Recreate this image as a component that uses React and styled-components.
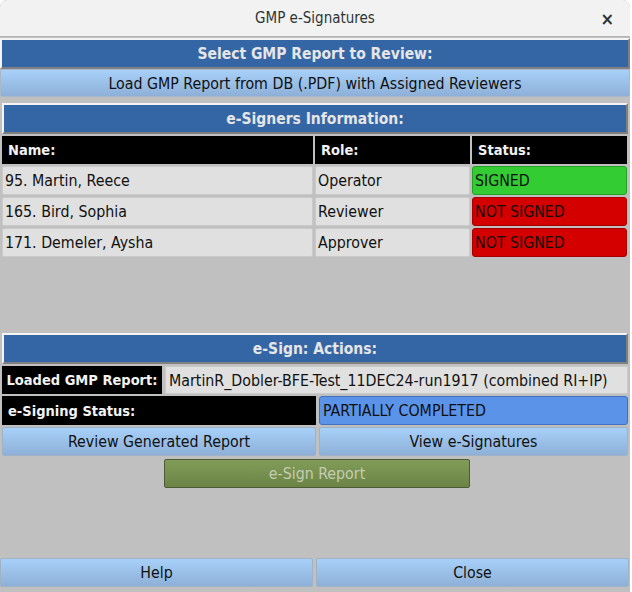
import styled, { createGlobalStyle } from 'styled-components';

const GlobalStyle = createGlobalStyle`
  html, body {
    margin: 0;
    padding: 0;
    background: #ffffff;
  }
  body {
    font-family: "DejaVu Sans Condensed", "DejaVu Sans", sans-serif;
    font-stretch: condensed;
  }
`;

const signers = [
  { name: '95. Martin, Reece', role: 'Operator', signed: true },
  { name: '165. Bird, Sophia', role: 'Reviewer', signed: false },
  { name: '171. Demeler, Aysha', role: 'Approver', signed: false },
];

export default function App() {
  return (
    <>
      <GlobalStyle />
      <Window>
        <TitleBar>
          <Title>GMP e-Signatures</Title>
          <CloseX>×</CloseX>
        </TitleBar>
        <Body>
          <SectionHeader>Select GMP Report to Review:</SectionHeader>
          <WideButton>Load GMP Report from DB (.PDF) with Assigned Reviewers</WideButton>

          <Inner>
            <SectionHeader>e-Signers Information:</SectionHeader>
            <Table>
              <HeadCell>Name:</HeadCell>
              <HeadCell>Role:</HeadCell>
              <HeadCell>Status:</HeadCell>
              {signers.map(s => (
                <Row key={s.name}>
                  <Cell>{s.name}</Cell>
                  <Cell>{s.role}</Cell>
                  <StatusCell signed={s.signed}>{s.signed ? 'SIGNED' : 'NOT SIGNED'}</StatusCell>
                </Row>
              ))}
            </Table>
          </Inner>

          <Spacer />

          <Inner>
            <SectionHeader>e-Sign: Actions:</SectionHeader>
            <LoadedRow>
              <Label center>Loaded GMP Report:</Label>
              <Value>MartinR_Dobler-BFE-Test_11DEC24-run1917 (combined RI+IP)</Value>
            </LoadedRow>
            <HalfRow>
              <Label>e-Signing Status:</Label>
              <StatusValue>PARTIALLY COMPLETED</StatusValue>
            </HalfRow>
            <HalfRow>
              <BlueButton>Review Generated Report</BlueButton>
              <BlueButton>View e-Signatures</BlueButton>
            </HalfRow>
            <SignRow>
              <SignButton>e-Sign Report</SignButton>
            </SignRow>
          </Inner>

          <Spacer />

          <Footer>
            <BlueButton>Help</BlueButton>
            <BlueButton>Close</BlueButton>
          </Footer>
        </Body>
      </Window>
    </>
  );
}

const Window = styled.div`
  width: 630px;
  height: 592px;
  display: flex;
  flex-direction: column;
  background: #c0c0c0;
  border-top-left-radius: 7px;
  border-top-right-radius: 7px;
  overflow: hidden;
`;

const TitleBar = styled.div`
  height: 37px;
  flex-shrink: 0;
  position: relative;
  display: flex;
  align-items: center;
  justify-content: center;
  background: #f2f2f2;
  border-bottom: 1px solid #b4b4b4;
  border-top-left-radius: 7px;
  border-top-right-radius: 7px;
  box-sizing: border-box;
`;

const Title = styled.span`
  font-size: 15px;
  color: #2e3436;
`;

const CloseX = styled.span`
  position: absolute;
  right: 16px;
  top: 8px;
  font-size: 18px;
  font-weight: bold;
  color: #2e3436;
`;

const Body = styled.div`
  flex: 1;
  display: flex;
  flex-direction: column;
  padding-top: 1px;
`;

const SectionHeader = styled.div`
  height: 31px;
  box-sizing: border-box;
  display: flex;
  align-items: center;
  justify-content: center;
  background: #3465a4;
  border-top: 2px solid #f4f4f4;
  border-left: 2px solid #f4f4f4;
  border-bottom: 2px solid #808080;
  border-right: 2px solid #808080;
  color: #e6e6e6;
  font-weight: bold;
  font-size: 15.5px;
`;

const buttonBase = `
  box-sizing: border-box;
  display: flex;
  align-items: center;
  justify-content: center;
  font-family: inherit;
  font-stretch: condensed;
  font-size: 15.8px;
  color: #101010;
  padding: 0;
  cursor: pointer;
`;

const WideButton = styled.button`
  ${buttonBase}
  height: 28px;
  width: 100%;
  border: 1px solid #a8b8c8;
  border-radius: 2px;
  background: linear-gradient(#a7d0f8, #8eb0d8);
`;

const BlueButton = styled.button`
  ${buttonBase}
  height: 29px;
  border: 1px solid #9fb2c6;
  border-radius: 2px;
  background: linear-gradient(#a7d0f8, #8eb0d8);
`;

const Inner = styled.div`
  display: flex;
  flex-direction: column;
  padding: 0 2px;
  margin-top: 6px;
`;

const Table = styled.div`
  display: grid;
  grid-template-columns: 311px 155px 155px;
  column-gap: 2px;
  row-gap: 2px;
  margin-top: 2px;
`;

const Row = styled.div`
  display: contents;
`;

const HeadCell = styled.div`
  height: 28px;
  display: flex;
  align-items: center;
  padding-left: 6px;
  background: #000;
  color: #f2f2f2;
  font-weight: bold;
  font-size: 14.5px;
`;

const Cell = styled.div`
  height: 29px;
  box-sizing: border-box;
  display: flex;
  align-items: center;
  padding-left: 2px;
  background: #e0e0e0;
  border: 1px solid #cacaca;
  border-radius: 2px;
  font-size: 15.8px;
  color: #101010;
`;

const StatusCell = styled(Cell)`
  background: ${props => (props.signed ? '#33cc33' : '#d40000')};
  border-color: ${props => (props.signed ? '#28a028' : '#a80000')};
  border-radius: 3px;
`;

const Spacer = styled.div`
  flex: 1;
`;

const LoadedRow = styled.div`
  display: grid;
  grid-template-columns: 160px 1fr;
  gap: 3px;
  margin-top: 2px;
  height: 28px;
`;

const Label = styled.div`
  display: flex;
  align-items: center;
  justify-content: ${props => (props.center ? 'center' : 'flex-start')};
  padding-left: ${props => (props.center ? '0' : '6px')};
  background: #000;
  color: #f2f2f2;
  font-weight: bold;
  font-size: 14.5px;
`;

const Value = styled.div`
  box-sizing: border-box;
  display: flex;
  align-items: center;
  padding-left: 3px;
  background: #e0e0e0;
  border: 1px solid #cacaca;
  font-size: 15.8px;
  color: #101010;
`;

const HalfRow = styled.div`
  display: grid;
  grid-template-columns: 314px 1fr;
  gap: 3px;
  margin-top: 2px;
  height: 29px;
`;

const StatusValue = styled.div`
  box-sizing: border-box;
  display: flex;
  align-items: center;
  padding-left: 3px;
  background: #5b93e8;
  border: 1px solid #4070c0;
  border-radius: 3px;
  font-size: 15.8px;
  color: #101010;
`;

const SignRow = styled.div`
  display: flex;
  justify-content: center;
  margin-top: 3px;
`;

const SignButton = styled.button`
  ${buttonBase}
  width: 306px;
  height: 29px;
  border: 1px solid #4c5c36;
  border-radius: 2px;
  background: linear-gradient(#819c58, #6b8446);
  color: #c4ccb4;
  margin-left: 4px;
`;

const Footer = styled.div`
  display: grid;
  grid-template-columns: 313px 1fr;
  gap: 3px;
  height: 29px;
  margin-bottom: 5px;
  padding-right: 1px;
`;
